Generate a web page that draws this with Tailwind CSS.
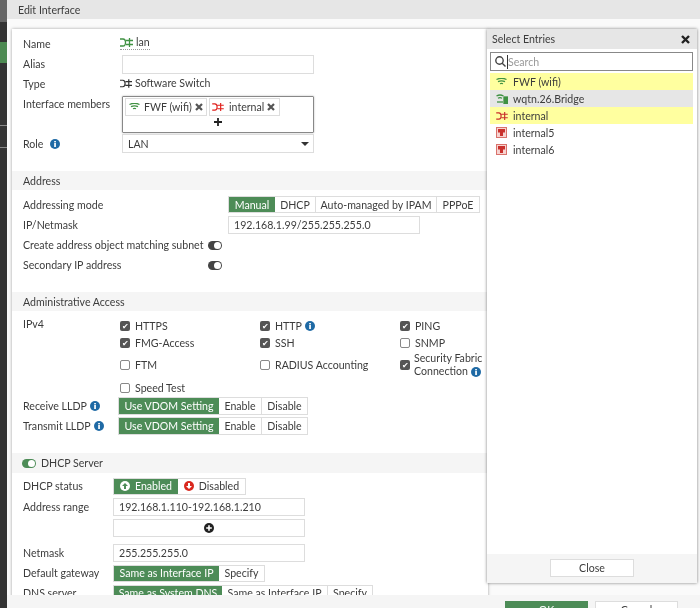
<!DOCTYPE html>
<html lang="en">
<head>
<meta charset="UTF-8">
<title>Edit Interface</title>
<script src="https://cdn.jsdelivr.net/npm/@tailwindcss/browser@4"></script>
</head>
<body class="bg-white">
<div class="relative w-[700px] h-[608px] overflow-hidden flex font-['Lato','Noto_Sans',sans-serif] text-[10.6px] leading-[14px] text-[#3c3c3c] blur-[0.35px]">

  <!-- left nav strip -->
  <div class="w-[7px] shrink-0 bg-[#333] flex flex-col">
    <div class="h-[22px] bg-[#666]"></div>
    <div class="h-[20px]"></div>
    <div class="h-[21px] bg-[#4d8a52]"></div>
    <div class="h-[63px] border-b border-[#888]"></div>
    <div class="h-[22px] border-b border-[#888]"></div>
  </div>

  <div class="flex-1 flex flex-col min-w-0">
    <div class="h-[19px] bg-[#e6e6e6] pl-[11px] pt-[3px]">Edit Interface</div>

    <div class="flex-1 min-h-0 bg-[#fafafa] pt-[10px] pl-[5px] overflow-hidden">
      <div class="w-[476px] h-full bg-white shadow-[0_0_3px_rgba(0,0,0,.35)]">

        <!-- interface -->
        <div class="pl-[11px] pt-[5px] h-[142px]">
          <div class="flex h-[20px] items-center"><span class="w-[97px]">Name</span>
            <span class="flex items-center gap-[3px] border-b border-dotted border-[#999] -mt-[3px]">
              <svg width="13" height="9" viewBox="0 0 13 9" fill="none" stroke="#3f9142" stroke-width="1.300"><path d="M0 1h3q2.500 0 2.500 3.500t-2.500 3.500H0M6 2.500h7M6 6.500h7M9.500 0v9"/></svg>lan
            </span>
          </div>
          <div class="flex h-[20px] items-center"><span class="w-[99px]">Alias</span>
            <span class="w-[192px] h-[19px] border border-[#ddd] bg-white"></span>
          </div>
          <div class="flex h-[20px] items-center"><span class="w-[97px]">Type</span>
            <span class="flex items-center gap-[3px] -mt-[2px]">
              <svg width="12" height="9" viewBox="0 0 13 9" fill="none" stroke="#333" stroke-width="1.300"><path d="M0 1h3q2.500 0 2.500 3.500t-2.500 3.500H0M6 2.500h7M6 6.500h7M9.500 0v9"/></svg>Software Switch
            </span>
          </div>
          <div class="flex mt-[2px]"><span class="w-[99px] pt-[1px]">Interface members</span>
            <div class="w-[192px] h-[37px] border border-[#888] rounded-[1px] shadow-[0_0_2px_rgba(0,0,0,.3)] px-[2px] pt-[1px]">
              <div class="flex gap-[2px]">
                <span class="h-[18px] w-[82px] border border-[#ddd] flex items-center pl-[3px] gap-[4px] whitespace-nowrap">
                  <svg width="11" height="8" viewBox="0 0 11 8" fill="none" stroke="#3f9142" stroke-width="1.300"><path d="M0.500 1.500Q5.500 -1 10.500 1.500M2 3.600Q5.500 2 9 3.600M4 5.800Q5.500 5 7 5.800"/></svg>
                  FWF (wifi)
                  <svg class="-ml-[1px]" width="8" height="8" viewBox="0 0 8 8" stroke="#555" stroke-width="2.200"><path d="M1 1l6 6M7 1l-6 6"/></svg>
                </span>
                <span class="h-[18px] w-[71px] border border-[#ddd] flex items-center pl-[2px] gap-[5px] whitespace-nowrap">
                  <svg width="12" height="8" viewBox="0 0 13 9" fill="none" stroke="#e0201c" stroke-width="1.300"><path d="M0 1h3q2.500 0 2.500 3.500t-2.500 3.500H0M6 2.500h7M6 6.500h7M9.500 0v9"/></svg>
                  internal
                  <svg class="-ml-[2px]" width="8" height="8" viewBox="0 0 8 8" stroke="#555" stroke-width="2.200"><path d="M1 1l6 6M7 1l-6 6"/></svg>
                </span>
              </div>
              <div class="flex justify-center mt-[2px]"><svg width="8" height="8" viewBox="0 0 8 8" stroke="#222" stroke-width="1.800"><path d="M4 0v8M0 4h8"/></svg></div>
            </div>
          </div>
          <div class="flex mt-[1px] items-center h-[19px]"><span class="w-[99px] flex items-center gap-[7px]">Role
              <svg width="10" height="10" viewBox="0 0 10 10"><circle cx="5" cy="5" r="5" fill="#1f6aa5"/><rect x="4.200" y="4" width="1.700" height="4" fill="#fff"/><rect x="4.200" y="2" width="1.700" height="1.400" fill="#fff"/></svg></span>
            <span class="w-[192px] h-[19px] border border-[#ddd] flex items-center justify-between pl-[5px] pr-[4px]">LAN<span class="w-0 h-0 border-x-[4px] border-x-transparent border-t-[4px] border-t-[#333]"></span></span>
          </div>
        </div>

        <!-- address -->
        <div class="h-[19px] bg-[#f5f5f5] pl-[11px] pt-[3px]">Address</div>
        <div class="pl-[11px] pt-[5px] h-[102px]">
          <div class="flex h-[20px] items-center"><span class="w-[205px] -mt-[1px]">Addressing mode</span>
            <div class="flex border border-[#ddd] h-[17px] -mt-[1px]">
              <span class="w-[46px] bg-[#4d8c57] text-white flex items-center justify-center">Manual</span>
              <span class="w-[41px] border-r border-[#ddd] flex items-center justify-center">DHCP</span>
              <span class="w-[121px] border-r border-[#ddd] flex items-center justify-center">Auto-managed by IPAM</span>
              <span class="w-[42px] flex items-center justify-center">PPPoE</span>
            </div>
          </div>
          <div class="flex h-[20px] items-center"><span class="w-[205px]">IP/Netmask</span>
            <span class="w-[192px] h-[18px] border border-[#ddd] pl-[5px] flex items-center">192.168.1.99/255.255.255.0</span>
          </div>
          <div class="flex h-[20px] items-center"><span class="w-[185px] whitespace-nowrap">Create address object matching subnet</span>
            <span class="w-[14px] h-[9px] rounded-full bg-[#444] relative"><span class="absolute right-[1px] top-[1px] w-[7px] h-[7px] rounded-full bg-white"></span></span>
          </div>
          <div class="flex h-[20px] items-center"><span class="w-[185px]">Secondary IP address</span>
            <span class="w-[14px] h-[9px] rounded-full bg-[#444] relative"><span class="absolute right-[1px] top-[1px] w-[7px] h-[7px] rounded-full bg-white"></span></span>
          </div>
        </div>

        <!-- admin access -->
        <div class="h-[19px] bg-[#f5f5f5] pl-[11px] pt-[3px]">Administrative Access</div>
        <div class="pl-[11px] h-[142px] pt-[6px]">
          <div class="flex">
            <span class="w-[97px] shrink-0">IPv4</span>
            <div class="grid grid-cols-[140px_140px_88px] auto-rows-min shrink-0">
              <label class="flex items-center gap-[5px] h-[17px]"><span class="w-[10px] h-[10px] rounded-[2px] bg-[#555] text-white text-[8px] leading-[10px] text-center">✔</span>HTTPS</label>
              <label class="flex items-center gap-[5px] h-[17px]"><span class="w-[10px] h-[10px] rounded-[2px] bg-[#555] text-white text-[8px] leading-[10px] text-center">✔</span>HTTP
                <svg class="-ml-[2px]" width="10" height="10" viewBox="0 0 10 10"><circle cx="5" cy="5" r="5" fill="#1f6aa5"/><rect x="4.200" y="4" width="1.700" height="4" fill="#fff"/><rect x="4.200" y="2" width="1.700" height="1.400" fill="#fff"/></svg></label>
              <label class="flex items-center gap-[5px] h-[17px]"><span class="w-[10px] h-[10px] rounded-[2px] bg-[#555] text-white text-[8px] leading-[10px] text-center">✔</span>PING</label>

              <label class="flex items-center gap-[5px] h-[17px]"><span class="w-[10px] h-[10px] rounded-[2px] bg-[#555] text-white text-[8px] leading-[10px] text-center">✔</span>FMG-Access</label>
              <label class="flex items-center gap-[5px] h-[17px]"><span class="w-[10px] h-[10px] rounded-[2px] bg-[#555] text-white text-[8px] leading-[10px] text-center">✔</span>SSH</label>
              <label class="flex items-center gap-[5px] h-[17px]"><span class="w-[10px] h-[10px] rounded-[2px] border border-[#888]"></span>SNMP</label>

              <label class="flex items-center gap-[5px] h-[28px]"><span class="w-[10px] h-[10px] rounded-[2px] border border-[#888]"></span>FTM</label>
              <label class="flex items-center gap-[5px] h-[28px]"><span class="w-[10px] h-[10px] rounded-[2px] border border-[#888]"></span>RADIUS Accounting</label>
              <label class="flex items-center gap-[4px] h-[28px] whitespace-nowrap"><span class="w-[10px] h-[10px] rounded-[2px] bg-[#555] text-white text-[8px] leading-[10px] text-center">✔</span>
                <span class="leading-[13px]">Security Fabric<br><span class="inline-flex items-center gap-[3px]">Connection
                <svg width="10" height="10" viewBox="0 0 10 10"><circle cx="5" cy="5" r="5" fill="#1f6aa5"/><rect x="4.200" y="4" width="1.700" height="4" fill="#fff"/><rect x="4.200" y="2" width="1.700" height="1.400" fill="#fff"/></svg></span></span></label>

              <label class="flex items-center gap-[5px] h-[17px] col-span-3"><span class="w-[10px] h-[10px] rounded-[2px] border border-[#888]"></span>Speed Test</label>
            </div>
          </div>
          <div class="flex items-center h-[20px]"><span class="w-[95px] flex items-center gap-[3px]">Receive LLDP
              <svg width="10" height="10" viewBox="0 0 10 10"><circle cx="5" cy="5" r="5" fill="#1f6aa5"/><rect x="4.200" y="4" width="1.700" height="4" fill="#fff"/><rect x="4.200" y="2" width="1.700" height="1.400" fill="#fff"/></svg></span>
            <div class="flex border border-[#ddd] h-[18px]">
              <span class="w-[100px] bg-[#4d8c57] text-white flex items-center justify-center">Use VDOM Setting</span>
              <span class="w-[43px] border-r border-[#ddd] flex items-center justify-center">Enable</span>
              <span class="w-[45px] flex items-center justify-center">Disable</span>
            </div>
          </div>
          <div class="flex items-center h-[20px]"><span class="w-[95px] flex items-center gap-[3px] whitespace-nowrap">Transmit LLDP
              <svg width="10" height="10" viewBox="0 0 10 10"><circle cx="5" cy="5" r="5" fill="#1f6aa5"/><rect x="4.200" y="4" width="1.700" height="4" fill="#fff"/><rect x="4.200" y="2" width="1.700" height="1.400" fill="#fff"/></svg></span>
            <div class="flex border border-[#ddd] h-[18px]">
              <span class="w-[100px] bg-[#4d8c57] text-white flex items-center justify-center">Use VDOM Setting</span>
              <span class="w-[43px] border-r border-[#ddd] flex items-center justify-center">Enable</span>
              <span class="w-[45px] flex items-center justify-center">Disable</span>
            </div>
          </div>
        </div>

        <!-- dhcp -->
        <div class="h-[20px] bg-[#f5f5f5] pl-[10px] flex items-center gap-[5px]">
          <span class="w-[14px] h-[9px] rounded-full bg-[#4d8c57] relative"><span class="absolute right-[1px] top-[1px] w-[7px] h-[7px] rounded-full bg-white"></span></span>DHCP Server
        </div>
        <div class="pl-[11px] pt-[3px]">
          <div class="flex h-[20px] items-center"><span class="w-[90px]">DHCP status</span>
            <div class="flex border border-[#ddd] h-[17px]">
              <span class="w-[64px] bg-[#4d8c57] text-white flex items-center justify-center gap-[5px]">
                <svg width="10" height="10" viewBox="0 0 10 10"><circle cx="5" cy="5" r="5" fill="#fff"/><path d="M5 2 8 5H6v3H4V5H2z" fill="#4d8c57"/></svg>Enabled</span>
              <span class="w-[67px] flex items-center justify-center gap-[5px]">
                <svg width="10" height="10" viewBox="0 0 10 10"><circle cx="5" cy="5" r="5" fill="#d9281e"/><path d="M5 8 2 5h2V2h2v3h2z" fill="#fff"/></svg>Disabled</span>
            </div>
          </div>
          <div class="flex h-[20px] items-center mt-[1px]"><span class="w-[90px]">Address range</span>
            <span class="w-[192px] h-[18px] border border-[#ddd] pl-[5px] flex items-center">192.168.1.110-192.168.1.210</span>
          </div>
          <div class="flex h-[20px] items-center mt-[1px]"><span class="w-[90px]"></span>
            <span class="w-[192px] h-[18px] border border-[#ddd] flex items-center justify-center">
              <svg width="10" height="10" viewBox="0 0 10 10"><circle cx="5" cy="5" r="5" fill="#222"/><path d="M5 2.200v5.600M2.200 5h5.600" stroke="#fff" stroke-width="1.600"/></svg></span>
          </div>
          <div class="flex h-[20px] items-center mt-[5px]"><span class="w-[90px]">Netmask</span>
            <span class="w-[192px] h-[18px] border border-[#ddd] pl-[5px] flex items-center">255.255.255.0</span>
          </div>
          <div class="flex h-[20px] items-center"><span class="w-[90px]">Default gateway</span>
            <div class="flex border border-[#ddd] h-[17px]">
              <span class="w-[105px] bg-[#4d8c57] text-white flex items-center justify-center">Same as Interface IP</span>
              <span class="w-[45px] flex items-center justify-center">Specify</span>
            </div>
          </div>
          <div class="flex h-[20px] items-center"><span class="w-[90px]">DNS server</span>
            <div class="flex border border-[#ddd] h-[17px]">
              <span class="w-[108px] bg-[#4d8c57] text-white flex items-center justify-center">Same as System DNS</span>
              <span class="w-[106px] border-r border-[#ddd] flex items-center justify-center">Same as Interface IP</span>
              <span class="w-[44px] flex items-center justify-center">Specify</span>
            </div>
          </div>
        </div>
      </div>
    </div>
  </div>

  <!-- sticky footer -->
  <div class="absolute left-[7px] right-0 bottom-0 h-[13px] bg-[#f5f5f5] flex justify-end gap-[7px] pr-[22px] pt-[6px]">
    <span class="w-[83px] h-[20px] bg-[#4d8c57] text-white flex justify-center pt-[2px]">OK</span>
    <span class="w-[83px] h-[20px] bg-white border border-[#ddd] flex justify-center pt-[1px]">Cancel</span>
  </div>

  <!-- select entries popup -->
  <div class="absolute left-[487px] top-[29px] w-[210px] h-[554px] bg-white shadow-[0_0_3px_rgba(0,0,0,.5)] flex flex-col">
    <div class="h-[20px] bg-[#e6e6e6] flex items-center justify-between pl-[5px] pr-[7px]">Select Entries
      <svg width="9" height="9" viewBox="0 0 9 9" stroke="#222" stroke-width="2.400"><path d="M1 1l7 7M8 1l-7 7"/></svg>
    </div>
    <div class="ml-[3px] mr-[4px] mt-[3px] h-[19px] border border-[#888] flex items-center pl-[4px] text-[#999]">
      <svg width="11" height="11" viewBox="0 0 11 11" fill="none" stroke="#444" stroke-width="1.400"><circle cx="4.500" cy="4.500" r="3.700"/><path d="M7.200 7.200 10.500 10.500"/></svg>
      <span class="border-l border-[#333] ml-[1px]">Search</span>
    </div>
    <ul class="ml-[3px] mr-[4px] mt-[2px] flex-1">
      <li class="h-[17px] bg-[#ffff9f] flex items-center pl-[6px] gap-[6px]"><svg class="w-[11px] h-[8px]" viewBox="0 0 11 8" fill="none" stroke="#3f9142" stroke-width="1.300"><path d="M0.500 1.500Q5.500 -1 10.500 1.500M2 3.600Q5.500 2 9 3.600M4 5.800Q5.500 5 7 5.800"/></svg>FWF (wifi)</li>
      <li class="h-[17px] bg-[#e6e6e6] flex items-center pl-[6px] gap-[5px]"><svg class="w-[12px] h-[10px]" viewBox="0 0 12 10" fill="none" stroke="#3f9142" stroke-width="1.300"><path d="M0.500 2Q4 0 7.500 2M2 4.200Q4 3 6 4.200"/><rect x="8" y="3" width="3.500" height="6.500" fill="#3f9142"/><path d="M1 8h6"/></svg>wqtn.26.Bridge</li>
      <li class="h-[17px] bg-[#ffff9f] flex items-center pl-[6px] gap-[5px]"><svg class="w-[12px] h-[8px]" viewBox="0 0 13 9" fill="none" stroke="#c9302c" stroke-width="1.300"><path d="M0 1h3q2.500 0 2.500 3.500t-2.500 3.500H0M6 2.500h7M6 6.500h7M9.500 0v9"/></svg>internal</li>
      <li class="h-[17px] flex items-center pl-[6px] gap-[6px]"><svg class="w-[11px] h-[11px]" viewBox="0 0 11 11"><rect x="0.500" y="0.500" width="10" height="10" fill="#f6d3d0" stroke="#d9726c"/><path d="M2 2h7v3.500H7v3.500H4V5.500H2z" fill="#c9302c"/></svg>internal5</li>
      <li class="h-[17px] flex items-center pl-[6px] gap-[6px]"><svg class="w-[11px] h-[11px]" viewBox="0 0 11 11"><rect x="0.500" y="0.500" width="10" height="10" fill="#f6d3d0" stroke="#d9726c"/><path d="M2 2h7v3.500H7v3.500H4V5.500H2z" fill="#c9302c"/></svg>internal6</li>
    </ul>
    <div class="h-[29px] bg-[#f5f5f5] flex justify-center pt-[5px]"><span class="w-[84px] h-[18px] bg-white border border-[#ddd] flex items-center justify-center">Close</span></div>
  </div>
</div>
</body>
</html>
